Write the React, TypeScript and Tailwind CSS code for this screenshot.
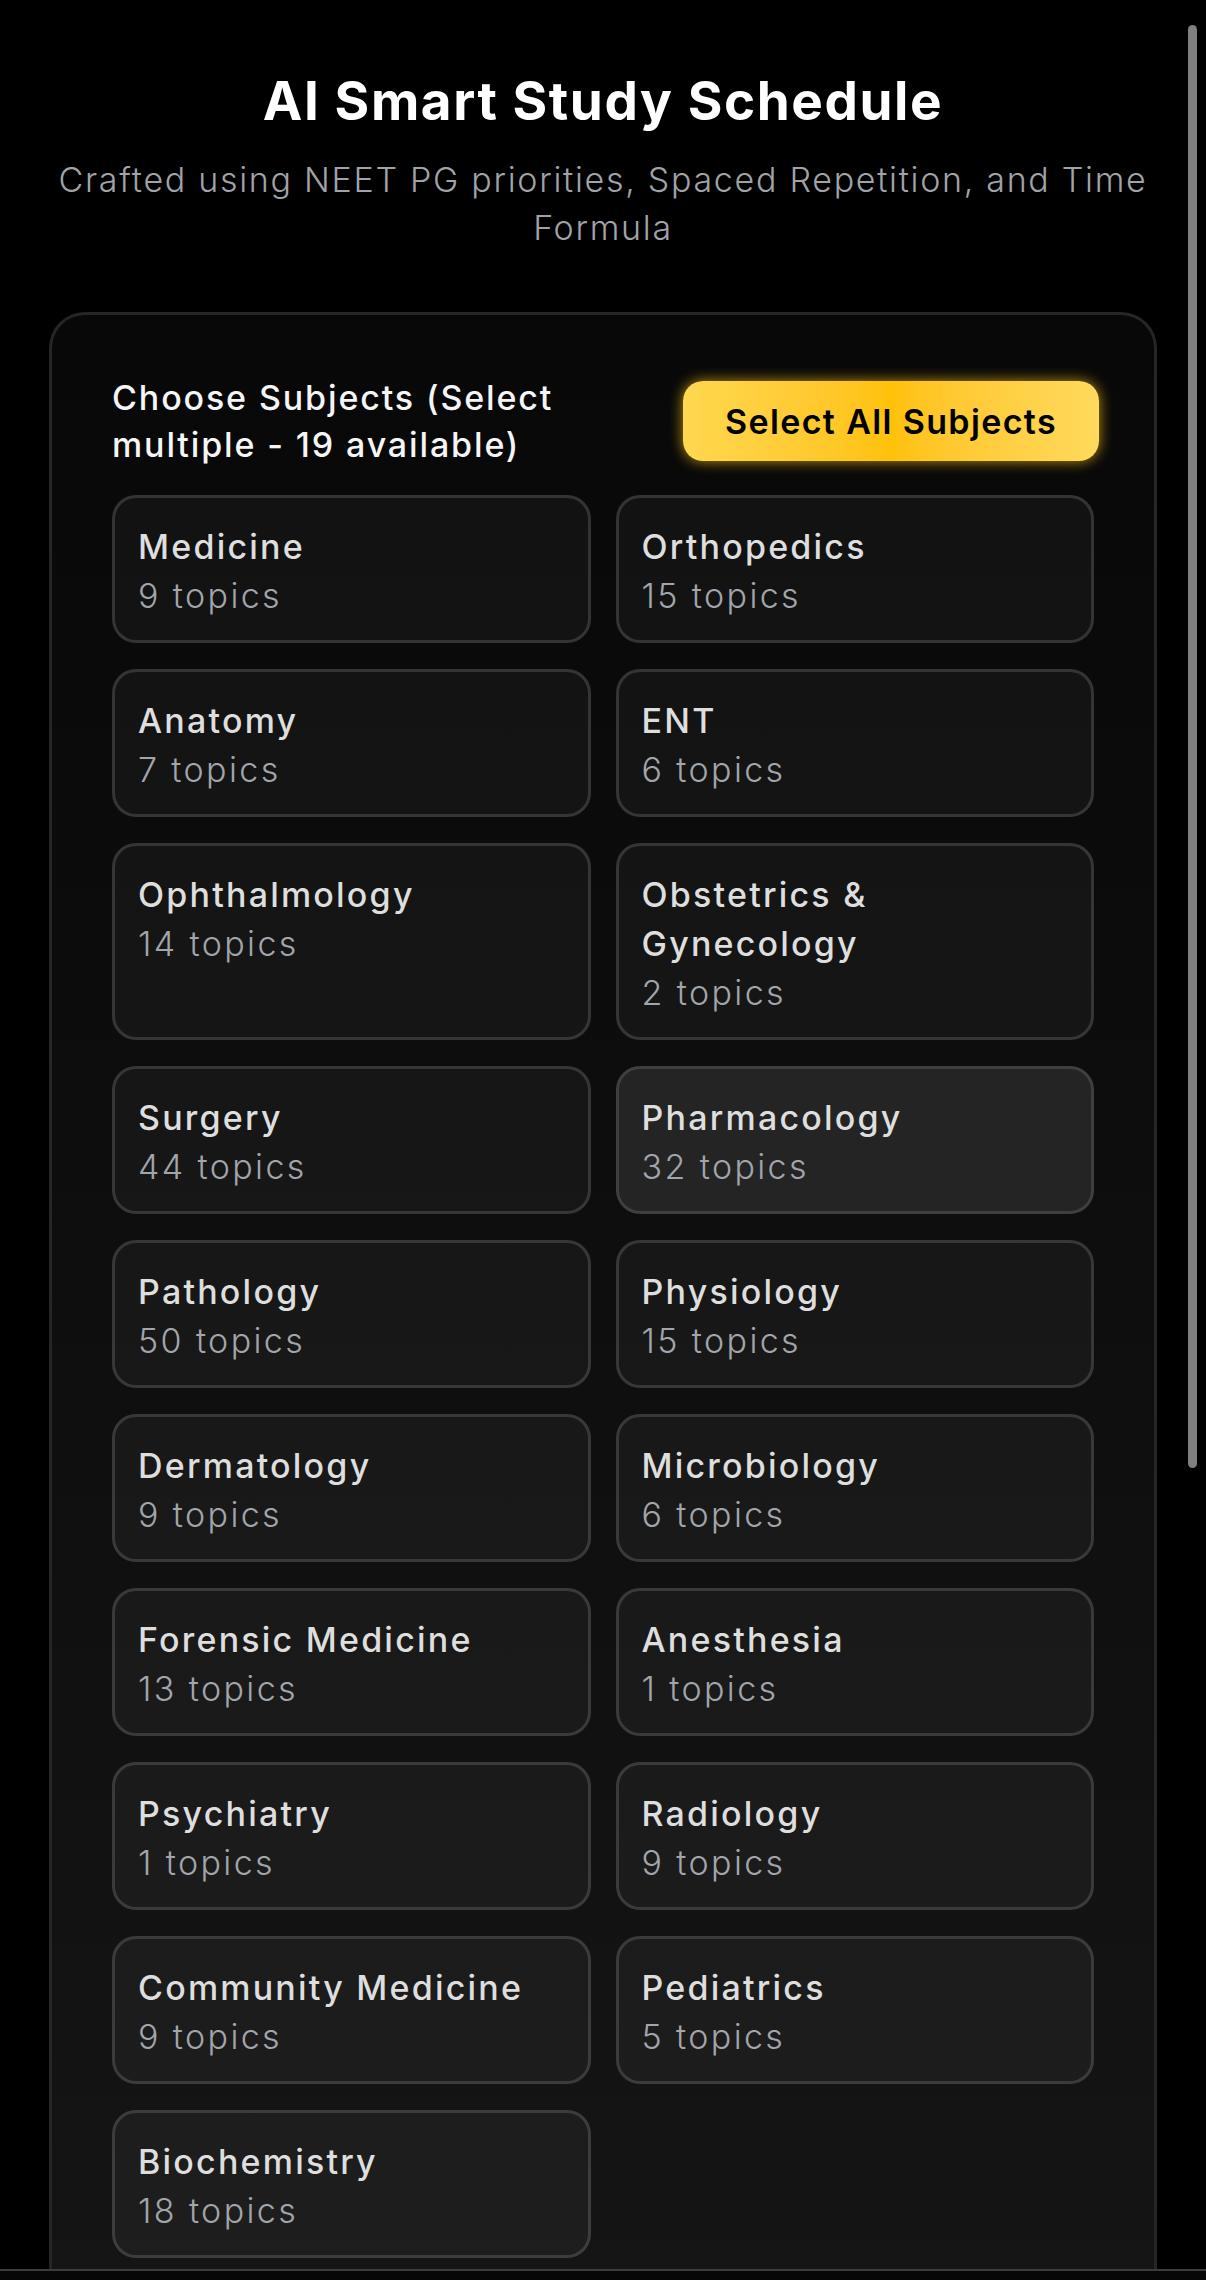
const subjects = [
  { name: "Medicine", topics: 9 },
  { name: "Orthopedics", topics: 15 },
  { name: "Anatomy", topics: 7 },
  { name: "ENT", topics: 6 },
  { name: "Ophthalmology", topics: 14 },
  { name: "Obstetrics & Gynecology", topics: 2 },
  { name: "Surgery", topics: 44 },
  { name: "Pharmacology", topics: 32, active: true },
  { name: "Pathology", topics: 50 },
  { name: "Physiology", topics: 15 },
  { name: "Dermatology", topics: 9 },
  { name: "Microbiology", topics: 6 },
  { name: "Forensic Medicine", topics: 13 },
  { name: "Anesthesia", topics: 1 },
  { name: "Psychiatry", topics: 1 },
  { name: "Radiology", topics: 9 },
  { name: "Community Medicine", topics: 9 },
  { name: "Pediatrics", topics: 5 },
  { name: "Biochemistry", topics: 18 },
];

const SubjectCard = ({ name, topics, active }: { name: string; topics: number; active?: boolean }) => (
  <div
    className={
      active
        ? "flex flex-col rounded-[24px] border-[3px] border-[#3f3f3f] bg-[#242424] px-[23px] pt-[24px] pb-[20px]"
        : "flex flex-col rounded-[24px] border-[3px] border-white/[0.14] bg-white/[0.04] px-[23px] pt-[24px] pb-[20px]"
    }
  >
    <div className="text-[34px] leading-[49px] font-medium tracking-[0.065em] text-[#dedede]">{name}</div>
    <div className="text-[34px] leading-[49px] font-light tracking-[0.07em] text-[#a2a5ab]">{topics} topics</div>
  </div>
);

export default function App() {
  return (
    <div
      className="relative h-[2280px] overflow-hidden bg-black px-[49px]"
      style={{ fontFamily: "Inter, 'Noto Sans', sans-serif" }}
    >
      {/* Header */}
      <div className="pt-[69px] text-center">
        <h1 className="text-[53px] leading-[64px] font-bold tracking-[0.03em] text-white">
          AI Smart Study Schedule
        </h1>
        <p className="mt-[23px] text-[34px] leading-[48px] font-light tracking-[0.05em] text-[#a0a3a8]">
          Crafted using NEET PG priorities, Spaced Repetition, and Time Formula
        </p>
      </div>

      {/* Panel */}
      <div className="mt-[60px] rounded-t-[36px] border-[3px] border-b-0 border-[#262626] bg-gradient-to-b from-[#080808] to-[#161616] px-[60px] pt-[59px] pb-[200px]">
        <div className="mb-[27px] flex items-center justify-between">
          <h2 className="text-[34px] leading-[47px] font-medium tracking-[0.055em] text-[#f5f5f5]">
            Choose Subjects (Select
            <br />
            multiple - 19 available)
          </h2>
          <button className="mr-[-5px] h-[80px] w-[416px] rounded-[20px] bg-gradient-to-r from-[#ffd84f] via-[#ffc107] to-[#ffda5c] text-[34px] font-semibold tracking-[0.04em] text-black shadow-[0_0_14px_rgba(255,196,20,0.75)]">
            Select All Subjects
          </button>
        </div>

        <div className="grid grid-cols-2 gap-x-[25px] gap-y-[26px]">
          {subjects.map((s) => (
            <SubjectCard key={s.name} {...s} />
          ))}
        </div>
      </div>

      {/* Scrollbar thumb */}
      <div className="absolute top-[25px] right-[9px] h-[1443px] w-[9px] rounded-full bg-[#808080]" />

      {/* Bottom edge */}
      <div className="absolute right-0 bottom-0 left-0 h-[11px] border-t-2 border-[#3c3c3c] bg-[#070707]" />
    </div>
  );
}
